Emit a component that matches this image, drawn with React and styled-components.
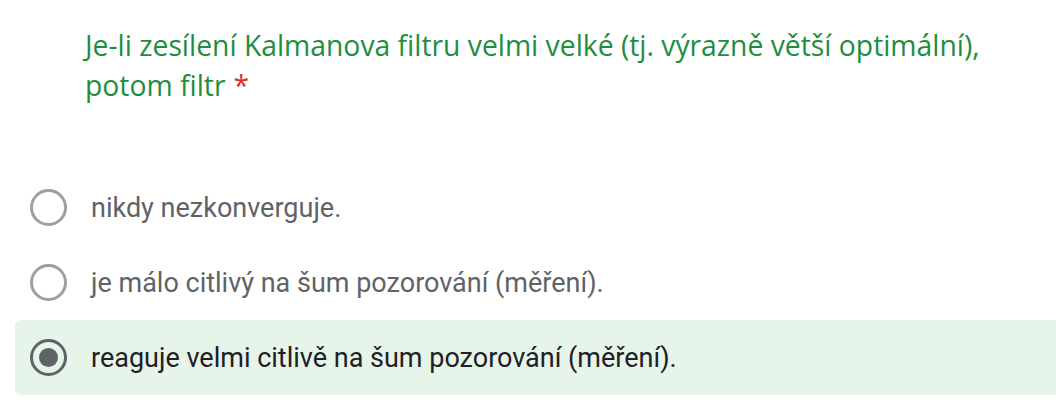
import React from 'react';
import styled, { createGlobalStyle } from 'styled-components';

const GlobalStyle = createGlobalStyle`
  html, body {
    margin: 0;
    padding: 0;
    background: #ffffff;
  }
`;

const Page = styled.div`
  width: 1056px;
  height: 411px;
  overflow: hidden;
  background: #ffffff;
`;

const Question = styled.h2`
  margin: 0;
  padding: 25px 0 0 85px;
  max-width: 920px;
  font-family: 'Open Sans', 'Noto Sans', sans-serif;
  font-size: 28.3px;
  font-weight: 400;
  line-height: 40px;
  color: #1e8e3e;
`;

const Required = styled.span`
  margin-left: 8px;
  color: #d93025;
`;

const Options = styled.div`
  display: flex;
  flex-direction: column;
  margin: 65px 0 0 15px;
`;

const Option = styled.label`
  display: flex;
  align-items: center;
  gap: 24px;
  height: 75px;
  padding-left: 15px;
  border-radius: 6px 0 0 6px;
  background: ${p => (p.$selected ? '#e6f4ea' : 'transparent')};
  cursor: pointer;
`;

const Radio = styled.span`
  box-sizing: border-box;
  width: 37px;
  height: 37px;
  flex: none;
  border-radius: 50%;
  border: 3px solid ${p => (p.$checked ? '#5f6368' : '#9aa0a6')};
  display: flex;
  align-items: center;
  justify-content: center;

  &::after {
    content: '';
    width: 19px;
    height: 19px;
    border-radius: 50%;
    background: #5f6368;
    display: ${p => (p.$checked ? 'block' : 'none')};
  }
`;

const OptionText = styled.span`
  font-family: Roboto, 'Liberation Sans', sans-serif;
  font-size: 27px;
  color: ${p => (p.$selected ? '#202124' : '#5f6368')};
`;

const choices = [
  'nikdy nezkonverguje.',
  'je málo citlivý na šum pozorování (měření).',
  'reaguje velmi citlivě na šum pozorování (měření).',
];

export default function App() {
  const selected = 2;
  return (
    <Page>
      <GlobalStyle />
      <Question>
        Je-li zesílení Kalmanova filtru velmi velké (tj. výrazně větší optimální), potom filtr
        <Required>*</Required>
      </Question>
      <Options>
        {choices.map((c, i) => (
          <Option key={c} $selected={i === selected}>
            <Radio $checked={i === selected} />
            <OptionText $selected={i === selected}>{c}</OptionText>
          </Option>
        ))}
      </Options>
    </Page>
  );
}
